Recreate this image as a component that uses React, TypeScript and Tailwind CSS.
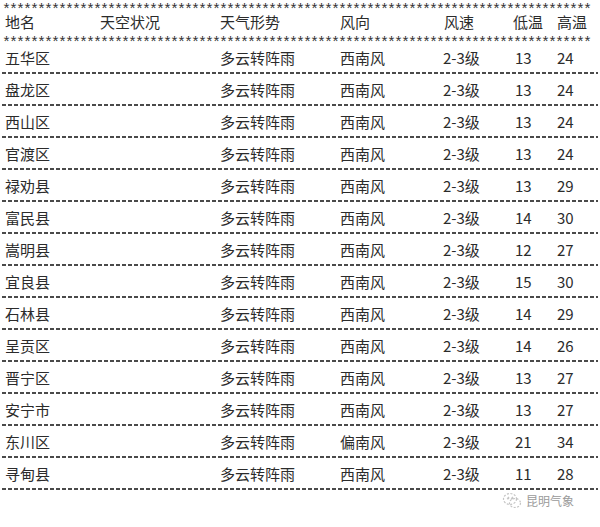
import React from "react";

const rows: [string, string, string, string, string, string][] = [
  ["五华区", "多云转阵雨", "西南风", "2-3级", "13", "24"],
  ["盘龙区", "多云转阵雨", "西南风", "2-3级", "13", "24"],
  ["西山区", "多云转阵雨", "西南风", "2-3级", "13", "24"],
  ["官渡区", "多云转阵雨", "西南风", "2-3级", "13", "24"],
  ["禄劝县", "多云转阵雨", "西南风", "2-3级", "13", "29"],
  ["富民县", "多云转阵雨", "西南风", "2-3级", "14", "30"],
  ["嵩明县", "多云转阵雨", "西南风", "2-3级", "12", "27"],
  ["宜良县", "多云转阵雨", "西南风", "2-3级", "15", "30"],
  ["石林县", "多云转阵雨", "西南风", "2-3级", "14", "29"],
  ["呈贡区", "多云转阵雨", "西南风", "2-3级", "14", "26"],
  ["晋宁区", "多云转阵雨", "西南风", "2-3级", "13", "27"],
  ["安宁市", "多云转阵雨", "西南风", "2-3级", "13", "27"],
  ["东川区", "多云转阵雨", "偏南风", "2-3级", "21", "34"],
  ["寻甸县", "多云转阵雨", "西南风", "2-3级", "11", "28"],
];

const grid =
  "grid grid-cols-[95px_120px_120px_103px_70px_44px_1fr] pl-[5px] items-center";

function Stars() {
  return (
    <div className="h-[8px] mx-[2px] whitespace-nowrap text-[15px] leading-[8px] tracking-[-2px] text-[#333] font-['Liberation_Mono',monospace]">
      <span className="relative top-[6px]">{"*".repeat(84)}</span>
    </div>
  );
}

function Dash() {
  return (
    <div className="h-[2px] mx-[2px] bg-[repeating-linear-gradient(90deg,#4a4a4a_0_4px,transparent_4px_6px)]" />
  );
}

export default function App() {
  return (
    <div className="w-[600px] h-[527px] bg-white text-[#2b2b2b] font-['Noto_Sans_CJK_SC',sans-serif] text-[15px] pt-[1px] overflow-hidden">
      <Stars />
      <div className={`${grid} h-[25px] leading-none`}>
        <span>地名</span>
        <span>天空状况</span>
        <span>天气形势</span>
        <span>风向</span>
        <span className="pl-[1px]">风速</span>
        <span>低温</span>
        <span>高温</span>
      </div>
      <Stars />
      {rows.map((r) => (
        <div key={r[0]} className="h-[32px] flex flex-col">
          <div className={`${grid} flex-1 leading-none`}>
            <span>{r[0]}</span>
            <span />
            <span>{r[1]}</span>
            <span>{r[2]}</span>
            <span>{r[3]}</span>
            <span className="pl-[2px]">{r[4]}</span>
            <span>{r[5]}</span>
          </div>
          <Dash />
        </div>
      ))}
      <div className="flex justify-end items-center gap-[4px] pr-[26px] pt-[2px] text-[#9a9a9a] text-[12px]">
        <svg width="20" height="18" viewBox="0 0 20 18" fill="none" stroke="#c4c4c4" strokeWidth="1.2" strokeDasharray="2 1.5">
          <ellipse cx="8" cy="7" rx="6.5" ry="5.5" />
          <ellipse cx="13" cy="11" rx="5.5" ry="4.5" />
          <circle cx="6" cy="6" r="0.8" fill="#c4c4c4" />
          <circle cx="10" cy="6" r="0.8" fill="#c4c4c4" />
        </svg>
        <span>昆明气象</span>
      </div>
    </div>
  );
}
